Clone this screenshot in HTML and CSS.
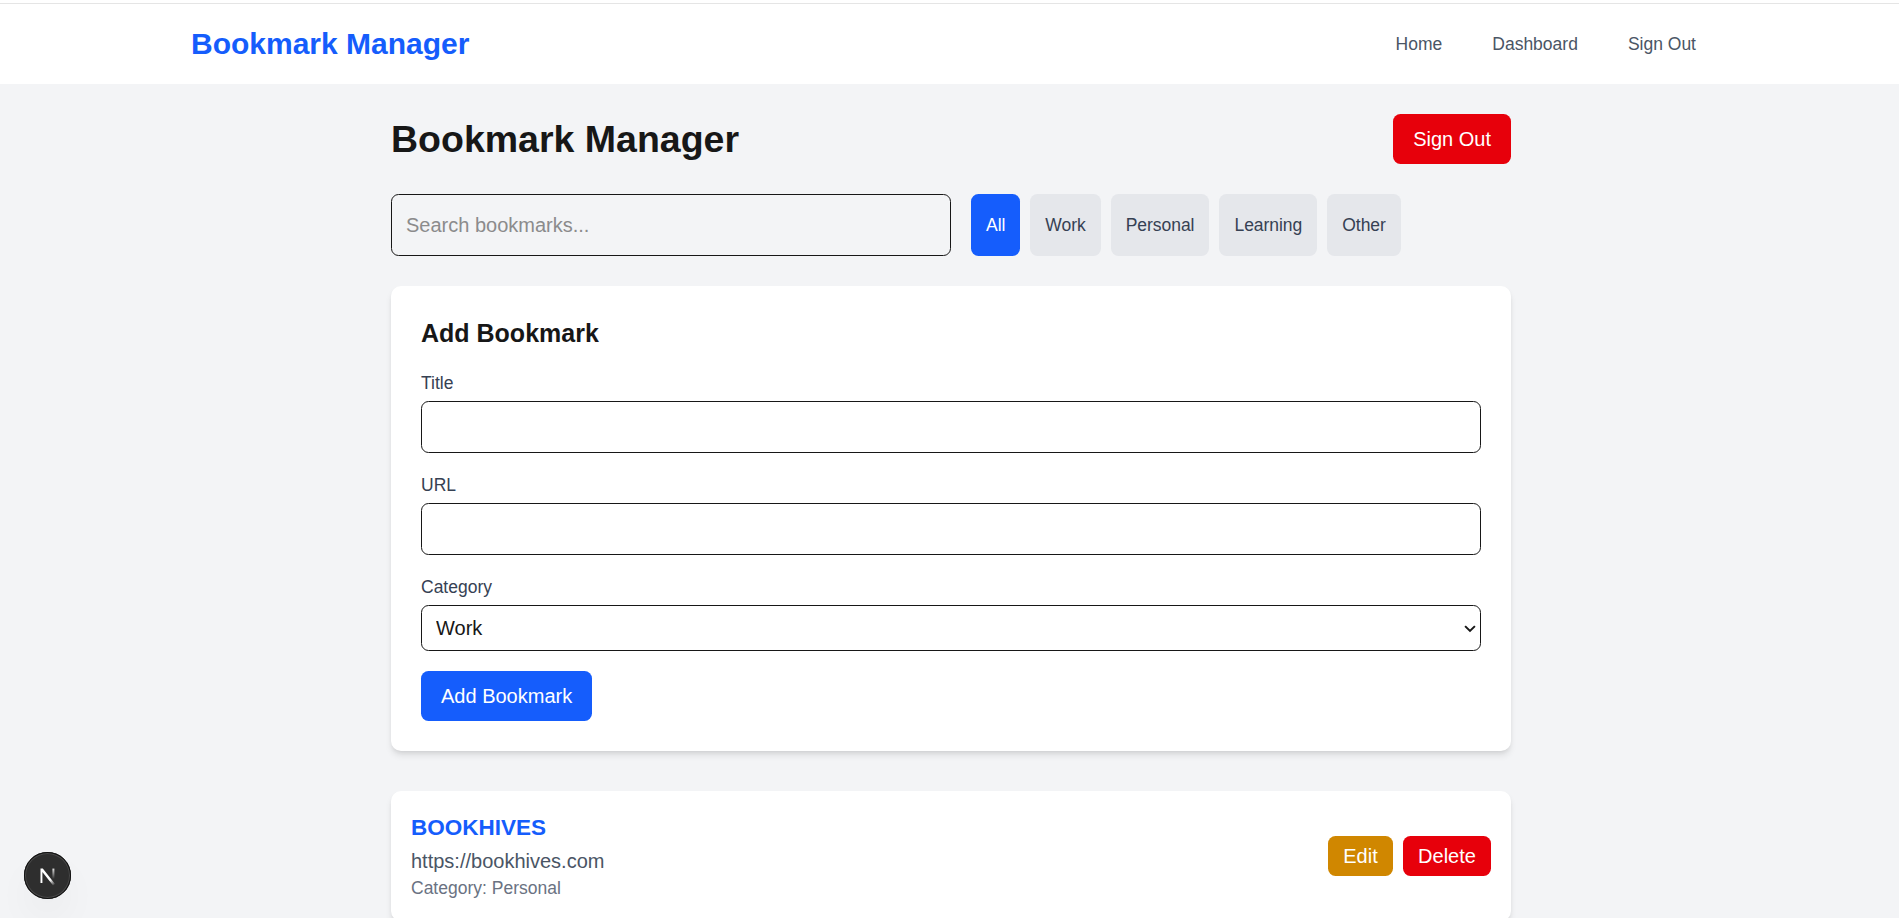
FILE: index.html
```html
<!DOCTYPE html>
<html lang="en">
<head>
<meta charset="utf-8">
<title>Bookmark Manager</title>
<link rel="stylesheet" href="styles.css">
</head>
<body>
<div class="page">
  <nav class="nav">
    <div class="nav-inner">
      <a class="brand">Bookmark Manager</a>
      <div class="nav-links"><a>Home</a><a>Dashboard</a><a>Sign Out</a></div>
    </div>
  </nav>
  <main class="main">
    <header class="header">
      <h1>Bookmark Manager</h1>
      <button class="btn red">Sign Out</button>
    </header>
    <div class="filters">
      <input class="field search" placeholder="Search bookmarks...">
      <div class="chips">
        <button class="chip active">All</button>
        <button class="chip">Work</button>
        <button class="chip">Personal</button>
        <button class="chip">Learning</button>
        <button class="chip">Other</button>
      </div>
    </div>
    <form class="card form">
      <h2>Add Bookmark</h2>
      <div class="fields">
        <div><label for="title">Title</label><input id="title" class="field"></div>
        <div><label for="url">URL</label><input id="url" class="field"></div>
        <div>
          <label for="category">Category</label>
          <div class="select-wrap">
            <select id="category" class="field select"><option>Work</option><option>Personal</option><option>Learning</option><option>Other</option></select>
            <svg class="chevron" width="12" height="8" viewBox="0 0 12 8" fill="none" stroke="#171717" stroke-width="2"><path d="M1.1 1.1 6 5.9l4.9-4.8"/></svg>
          </div>
        </div>
        <button type="button" class="btn blue">Add Bookmark</button>
      </div>
    </form>
    <article class="card bookmark">
      <div>
        <h3>BOOKHIVES</h3>
        <p class="url">https://bookhives.com</p>
        <p class="category">Category: Personal</p>
      </div>
      <div class="actions">
        <button class="btn small yellow">Edit</button>
        <button class="btn small red">Delete</button>
      </div>
    </article>
  </main>
</div>
<div class="badge">
  <svg width="50" height="50" viewBox="0 0 50 50" fill="none">
    <defs>
      <linearGradient id="diag" x1="27" y1="27" x2="33" y2="35" gradientUnits="userSpaceOnUse"><stop stop-color="#fff"/><stop offset=".3" stop-color="#fff"/><stop offset="1" stop-color="#fff" stop-opacity="0"/></linearGradient>
      <linearGradient id="stem" x1="31" y1="18" x2="31" y2="29" gradientUnits="userSpaceOnUse"><stop stop-color="#fff" stop-opacity=".9"/><stop offset="1" stop-color="#fff" stop-opacity="0"/></linearGradient>
    </defs>
    <path d="M31.4 18.6v11" stroke="url(#stem)" stroke-width="2"/>
    <path d="M18.5 18.6h2.3l12.2 15.3-1.9 1.5L20.4 22v11h-1.9z" fill="url(#diag)"/>
  </svg>
</div>
</body>
</html>
```
FILE: styles.css
```css
* { box-sizing: border-box; margin: 0; padding: 0; }
html { font-size: 20px; }
body {
  height: 918px;
  overflow: hidden;
  background: #f3f4f6;
  color: #171717;
  font: 1rem/1.5 "Liberation Sans", Arial, sans-serif;
}
button, input, select { font: inherit; color: inherit; }
.page { width: 1902px; }
.nav { background: #fff; padding-top: 3px; }
.nav-inner {
  height: 81px;
  border-top: 1px solid #e5e5e5;
  padding: 0 191px;
  display: flex;
  align-items: center;
  justify-content: space-between;
}
.brand { color: #155dfc; font-size: 1.5rem; font-weight: 700; line-height: 2rem; }
.nav-links { display: flex; gap: 1rem; }
.nav-links a { color: #4a5565; font-size: .875rem; line-height: 1.25rem; padding: .5rem .75rem; }
.main { width: 1120px; margin: 0 auto; padding: 1.5rem 0; }
.header { display: flex; align-items: center; justify-content: space-between; margin-bottom: 1.5rem; }
h1 { font-size: 1.875rem; line-height: 2.25rem; }
.btn { border: 0; border-radius: .375rem; color: #fff; padding: .5rem 1rem; }
.small { padding: .25rem .72rem; line-height: 1.5rem; }
.red { background: #e7000b; }
.blue { background: #155dfc; }
.yellow { background: #d08700; min-width: 65px; }
.small.red { min-width: 88px; }
.filters { display: flex; gap: 1rem; margin-bottom: 1.5rem; }
.field {
  display: block;
  width: 100%;
  height: 52px;
  border: 1px solid #171717;
  border-radius: .375rem;
  background: transparent;
  padding: 0 .75rem;
}
.search { width: 560px; height: 62px; padding-left: 14px; }
.search::placeholder { color: #8b8b8c; opacity: 1; }
.chips { display: flex; gap: .5rem; }
.chip {
  border: 0;
  border-radius: .375rem;
  background: #e5e7eb;
  color: #364153;
  font-size: .875rem;
  letter-spacing: -.04px;
  padding: 0 .75rem;
}
.active { background: #155dfc; color: #fff; }
.card {
  background: #fff;
  border-radius: .5rem;
  box-shadow: 0 5px 7.5px -1.25px rgba(0, 0, 0, .1), 0 2.5px 5px -2.5px rgba(0, 0, 0, .1);
}
.form { padding: 1.5rem; margin-bottom: 2rem; }
h2 { font-size: 1.25rem; line-height: 1.75rem; margin-bottom: 1rem; }
.fields { display: flex; flex-direction: column; align-items: stretch; gap: 1rem; }
.fields .btn { align-self: flex-start; }
label { display: block; color: #364153; font-size: .875rem; line-height: 1.25rem; margin-bottom: .25rem; }
.select-wrap { position: relative; }
.select { height: 46px; padding: 0 14px; appearance: none; }
.chevron { position: absolute; right: 5px; top: 20px; pointer-events: none; }
.bookmark { display: flex; justify-content: space-between; align-items: center; padding: 1rem; }
h3 { color: #155dfc; font-size: 1.125rem; line-height: 33px; padding-bottom: 2px; }
.url { color: #4a5565; }
.category { color: #6a7282; font-size: .875rem; line-height: 1.25rem; }
.actions { display: flex; gap: .5rem; }
.badge {
  position: fixed;
  left: 24px;
  top: 852px;
  width: 47px;
  height: 47px;
  border-radius: 50%;
  background: #2e2e2e;
  box-shadow: inset 0 0 0 1px #111, inset 0 0 0 2px #484848, 0 20px 40px -10px rgba(0, 0, 0, .1);
}
.badge svg { position: absolute; left: -2px; top: -2px; }
```
